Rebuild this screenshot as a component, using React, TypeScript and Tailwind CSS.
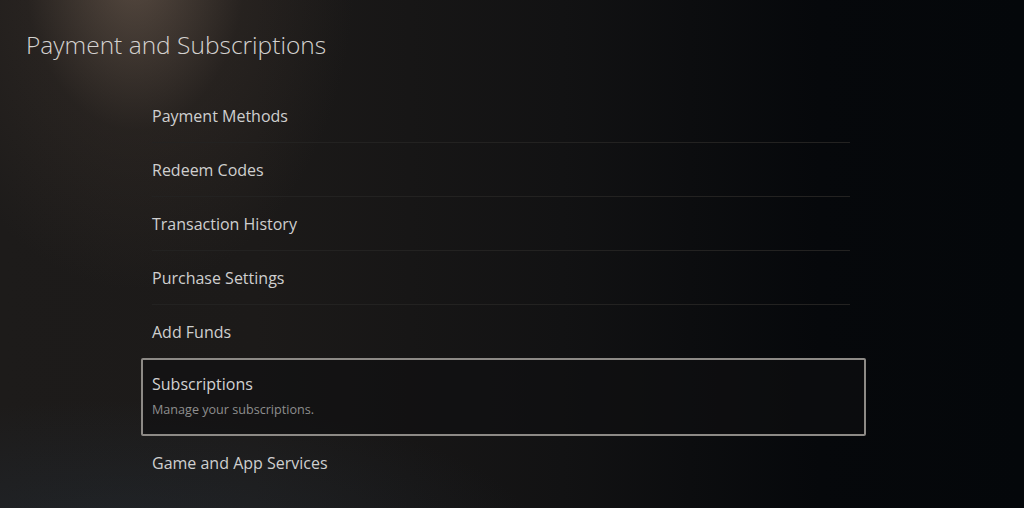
const items = [
  "Payment Methods",
  "Redeem Codes",
  "Transaction History",
  "Purchase Settings",
  "Add Funds",
];

export default function App() {
  return (
    <div className="relative h-[508px] w-[1024px] overflow-hidden bg-[#07090c] font-['Open_Sans',sans-serif] text-[#cfcfcf]">
      {/* Background lighting */}
      <div className="absolute inset-0 bg-[linear-gradient(90deg,#1d1b1a_0%,#1c1a19_25%,#121213_55%,#06080b_80%,#04070a_100%)]" />
      <div className="absolute inset-0 bg-[radial-gradient(ellipse_220px_320px_at_135px_-30px,rgba(125,105,90,0.6),rgba(70,58,50,0.25)_50%,transparent_100%)]" />
      <div className="absolute inset-0 bg-[radial-gradient(ellipse_420px_140px_at_120px_540px,rgba(40,55,70,0.35),transparent_100%)]" />

      <div className="relative flex flex-col">
        <h1 className="pl-[26px] pt-[29px] text-[24.5px] font-light leading-[32px] text-[#d4d2d0]">
          Payment and Subscriptions
        </h1>

        <div className="mt-[28px] flex w-[866px] flex-col pl-[141px]">
          {items.map((label, i) => (
            <div key={label} className="pl-[11px] pr-[16px]">
              <div
                className={`flex items-center text-[16px] ${
                  i < items.length - 1 ? "h-[54px] border-b border-[#232221]" : "h-[53px]"
                }`}
              >
                {label}
              </div>
            </div>
          ))}

          <div className="flex h-[78px] flex-col rounded-[2px] border-2 border-[#8d8a86] bg-[#0f0f10]/60 pl-[9px] pt-[13px]">
            <div className="text-[16px] leading-[22px] text-[#d2d2d2]">Subscriptions</div>
            <div className="mt-[7px] text-[12.6px] leading-[16px] text-[#8e8e8e]">
              Manage your subscriptions.
            </div>
          </div>

          <div className="flex h-[54px] items-center pl-[11px] text-[16px]">
            Game and App Services
          </div>
        </div>
      </div>
    </div>
  );
}
